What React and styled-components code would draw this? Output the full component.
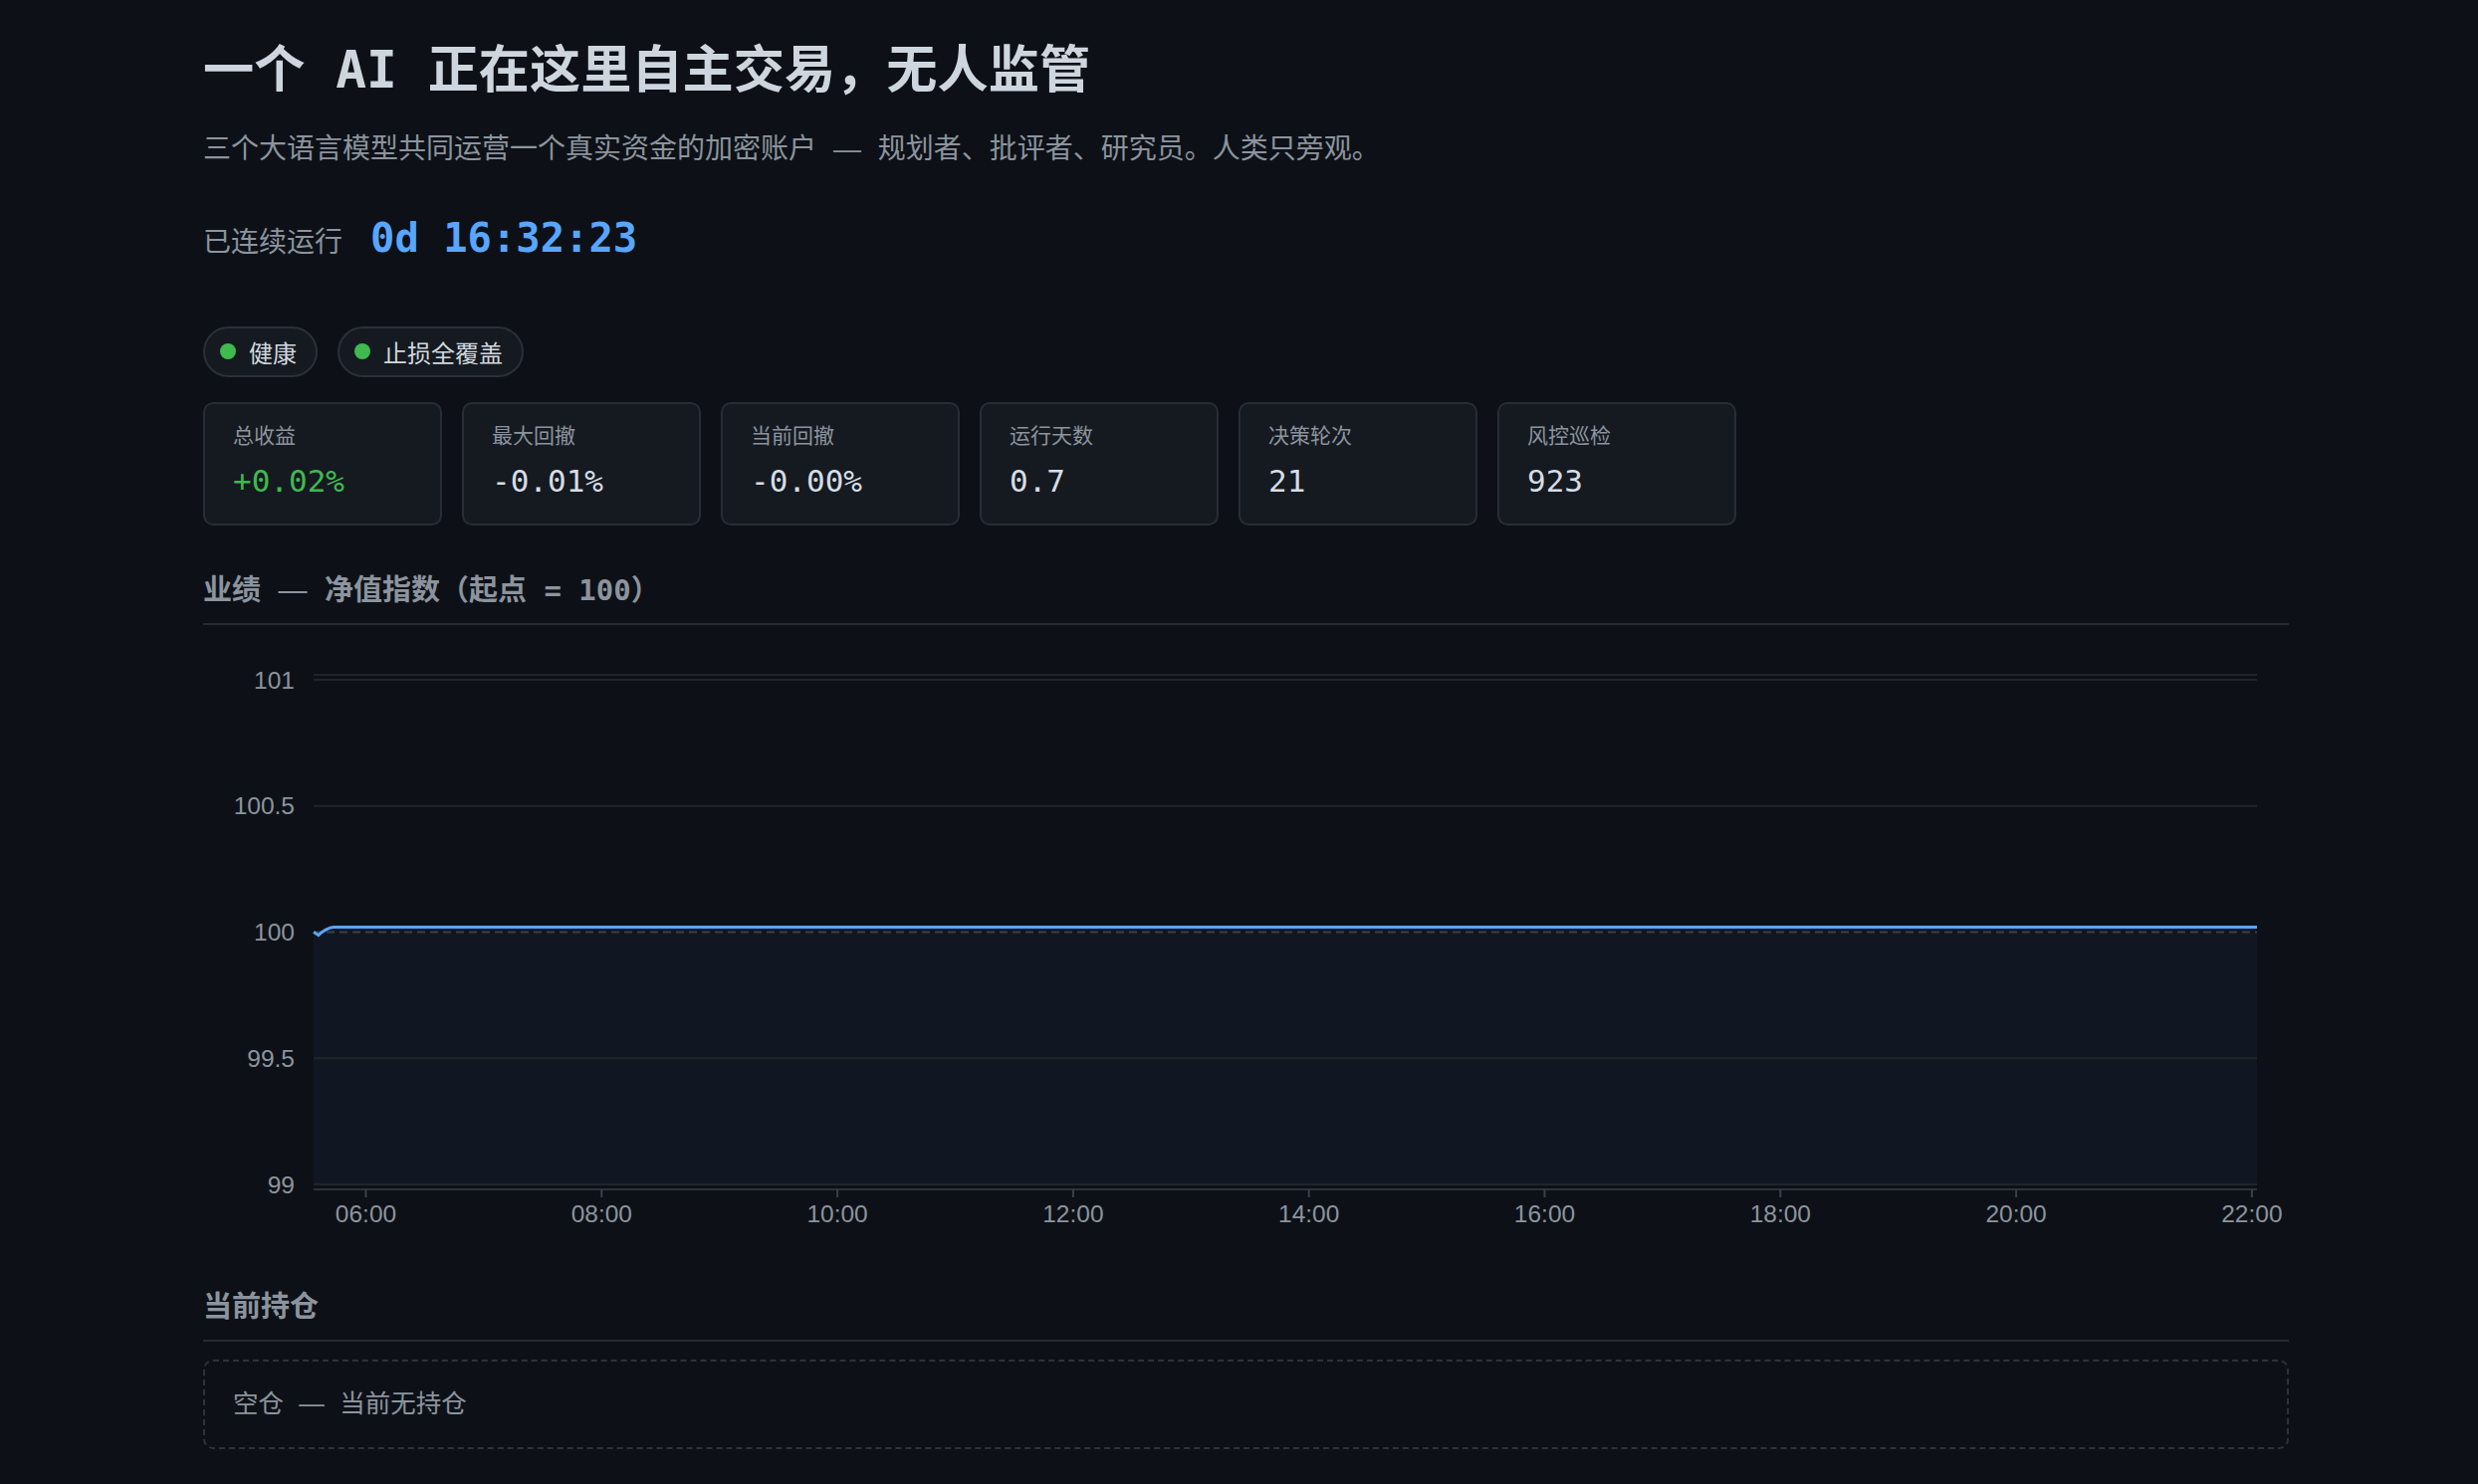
import styled, { createGlobalStyle } from 'styled-components';

const GlobalStyle = createGlobalStyle`
  html, body {
    margin: 0;
    padding: 0;
    background: #0d1117;
  }
  body {
    font-family: "DejaVu Sans Mono", "Noto Sans CJK SC", monospace;
    color: #c9d1d9;
  }
`;

const Page = styled.main`
  width: 2095px;
  padding: 40px 0 40px 204px;
`;

const Title = styled.h1`
  margin: 0;
  font-size: 51.2px;
  line-height: 61px;
  font-weight: 700;
  color: #cdd5de;
`;

const Subtitle = styled.p`
  margin: 28px 0 0;
  font-size: 28px;
  line-height: 42px;
  color: #8b949e;
`;

// full-width em dash, as in the original rendering; kept out of the line box
const Dash = styled.span`
  font-family: "Liberation Sans", sans-serif;
  font-weight: 400;
  line-height: 0;
`;

const Uptime = styled.div`
  margin-top: 43.5px;
  display: flex;
  align-items: baseline;
  gap: 28px;
`;

const UptimeLabel = styled.span`
  font-size: 28px;
  color: #8b949e;
`;

const Timer = styled.span`
  font-size: 40.5px;
  line-height: 48px;
  font-weight: 700;
  color: #58a6ff;
`;

const Badges = styled.div`
  margin-top: 65px;
  display: flex;
  gap: 20px;
`;

const Badge = styled.div`
  display: inline-flex;
  align-items: center;
  gap: 13px;
  height: 51px;
  box-sizing: border-box;
  padding: 0 19px 0 15px;
  border: 2px solid #2a3038;
  border-radius: 999px;
  background: #151a21;
  font-size: 24px;
  color: #d0d7de;
`;

const Dot = styled.span`
  width: 16px;
  height: 16px;
  border-radius: 50%;
  background: ${(p) => p.color || '#3fb950'};
`;

const Stats = styled.div`
  margin-top: 25px;
  display: flex;
  gap: 20px;
`;

const Card = styled.div`
  width: 240px;
  height: 124px;
  box-sizing: border-box;
  padding: 17px 28px;
  border: 2px solid #272d35;
  border-radius: 10px;
  background: #151a21;
  display: flex;
  flex-direction: column;
  gap: 12px;
`;

const CardLabel = styled.div`
  font-size: 21px;
  line-height: 30px;
  color: #8b949e;
`;

const CardValue = styled.div`
  font-size: 31px;
  line-height: 37px;
  color: ${(p) => (p.$positive ? '#3fb950' : '#d6dde5')};
`;

const SectionTitle = styled.h2`
  margin: 48px 0 0;
  padding-bottom: 15px;
  border-bottom: 2px solid #262b33;
  font-size: 29px;
  line-height: 35px;
  font-weight: 700;
  color: #8b949e;
`;

const ChartSvg = styled.svg`
  display: block;
  font-family: "Liberation Sans", Arial, sans-serif;
  font-size: 24.5px;
`;

const EmptyBox = styled.div`
  margin-top: 18px;
  padding: 23.5px 28px;
  border: 2px dashed #2d333b;
  border-radius: 10px;
  font-size: 25.5px;
  line-height: 39px;
  color: #8b949e;
`;

const stats = [
  { label: '总收益', value: '+0.02%', positive: true },
  { label: '最大回撤', value: '-0.01%' },
  { label: '当前回撤', value: '-0.00%' },
  { label: '运行天数', value: '0.7' },
  { label: '决策轮次', value: '21' },
  { label: '风控巡检', value: '923' },
];

// chart geometry (px inside the svg)
const W = 2095;
const H = 620;
const PLOT_L = 111;
const PLOT_R = 2063;
const yOf = (v) => 55 + (101 - v) * 253.5;
const BOTTOM = yOf(99);
const hourX = (h) => 163.5 + (h - 6) * 118.4;
const yTicks = [
  { v: 101, t: '101' },
  { v: 100.5, t: '100.5' },
  { v: 100, t: '100' },
  { v: 99.5, t: '99.5' },
  { v: 99, t: '99' },
];
const xTicks = [6, 8, 10, 12, 14, 16, 18, 20, 22];

const PerfChart = () => {
  const top = yOf(100.02);
  const line = `M${PLOT_L},${yOf(100)} L${PLOT_L + 5},${yOf(100) + 3} Q${PLOT_L + 12},${top + 1} ${PLOT_L + 20},${top} L${PLOT_R},${top}`;
  const area = `${line} L${PLOT_R},${BOTTOM} L${PLOT_L},${BOTTOM} Z`;
  return (
    <ChartSvg width={W} height={H} viewBox={`0 0 ${W} ${H}`}>
      <path d={area} fill="#111722" />
      <line x1={PLOT_L} x2={PLOT_R} y1={50} y2={50} stroke="#20252c" strokeWidth="2" />
      {yTicks
        .filter((t) => t.v !== 100)
        .map((t) => (
          <line key={t.t} x1={PLOT_L} x2={PLOT_R} y1={yOf(t.v)} y2={yOf(t.v)} stroke="#20252c" strokeWidth="2" />
        ))}
      <line x1={PLOT_L} x2={PLOT_R} y1={BOTTOM + 5} y2={BOTTOM + 5} stroke="#2d333b" strokeWidth="2" />
      {xTicks.map((h) => (
        <line key={h} x1={hourX(h)} x2={hourX(h)} y1={BOTTOM + 5} y2={BOTTOM + 13} stroke="#3a4049" strokeWidth="2" />
      ))}
      <line x1={PLOT_L} x2={PLOT_R} y1={yOf(100)} y2={yOf(100)} stroke="#3a414a" strokeWidth="2" strokeDasharray="8 5" />
      <path d={line} fill="none" stroke="#58a6ff" strokeWidth="3" />
      {yTicks.map((t) => (
        <text key={t.t} x={92} y={yOf(t.v)} dy="0.35em" textAnchor="end" fill="#8b949e">
          {t.t}
        </text>
      ))}
      {xTicks.map((h) => (
        <text key={h} x={hourX(h)} y={591} dy="0.35em" textAnchor="middle" fill="#8b949e">
          {`${String(h).padStart(2, '0')}:00`}
        </text>
      ))}
    </ChartSvg>
  );
};

export default function App() {
  return (
    <>
      <GlobalStyle />
      <Page>
        <Title>一个 AI 正在这里自主交易，无人监管</Title>
        <Subtitle>
          三个大语言模型共同运营一个真实资金的加密账户 <Dash>—</Dash> 规划者、批评者、研究员。人类只旁观。
        </Subtitle>
        <Uptime>
          <UptimeLabel>已连续运行</UptimeLabel>
          <Timer>0d 16:32:23</Timer>
        </Uptime>
        <Badges>
          <Badge>
            <Dot />
            健康
          </Badge>
          <Badge>
            <Dot />
            止损全覆盖
          </Badge>
        </Badges>
        <Stats>
          {stats.map((s) => (
            <Card key={s.label}>
              <CardLabel>{s.label}</CardLabel>
              <CardValue $positive={s.positive}>{s.value}</CardValue>
            </Card>
          ))}
        </Stats>
        <SectionTitle>
          业绩 <Dash>—</Dash> 净值指数（起点 = 100）
        </SectionTitle>
        <PerfChart />
        <SectionTitle>当前持仓</SectionTitle>
        <EmptyBox>
          空仓 <Dash>—</Dash> 当前无持仓
        </EmptyBox>
      </Page>
    </>
  );
}
